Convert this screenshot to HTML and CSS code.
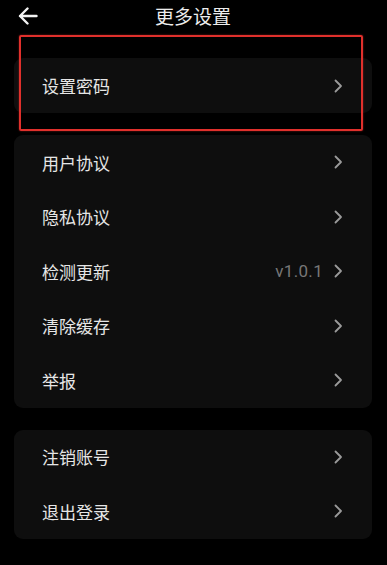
FILE: index.html
```html
<!DOCTYPE html>
<html lang="zh">
<head>
<meta charset="utf-8">
<link rel="stylesheet" href="styles.css">
</head>
<body>
<div class="page">
  <header class="header">
    <svg class="back" width="20" height="18" viewBox="0 0 20 18"><path d="M18.5 9H2M9.5 1.5L2 9l7.5 7.5" fill="none" stroke="#f2f2f2" stroke-width="2.4" stroke-linecap="round" stroke-linejoin="round"/></svg>
    <h1 class="title">更多设置</h1>
  </header>
  <div class="group first">
    <div class="row tall"><span class="label">设置密码</span><span class="right"><svg class="chev" width="9" height="14" viewBox="0 0 9 14"><path d="M1.5 1.5L7 7l-5.5 5.5" fill="none" stroke="#9a9a9a" stroke-width="1.8" stroke-linecap="round" stroke-linejoin="round"/></svg></span></div>
    <div class="highlight"></div>
  </div>
  <div class="group">
    <div class="row"><span class="label">用户协议</span><span class="right"><svg class="chev" width="9" height="14" viewBox="0 0 9 14"><path d="M1.5 1.5L7 7l-5.5 5.5" fill="none" stroke="#9a9a9a" stroke-width="1.8" stroke-linecap="round" stroke-linejoin="round"/></svg></span></div>
    <div class="row"><span class="label">隐私协议</span><span class="right"><svg class="chev" width="9" height="14" viewBox="0 0 9 14"><path d="M1.5 1.5L7 7l-5.5 5.5" fill="none" stroke="#9a9a9a" stroke-width="1.8" stroke-linecap="round" stroke-linejoin="round"/></svg></span></div>
    <div class="row"><span class="label">检测更新</span><span class="right"><span class="ver">v1.0.1</span><svg class="chev" width="9" height="14" viewBox="0 0 9 14"><path d="M1.5 1.5L7 7l-5.5 5.5" fill="none" stroke="#9a9a9a" stroke-width="1.8" stroke-linecap="round" stroke-linejoin="round"/></svg></span></div>
    <div class="row"><span class="label">清除缓存</span><span class="right"><svg class="chev" width="9" height="14" viewBox="0 0 9 14"><path d="M1.5 1.5L7 7l-5.5 5.5" fill="none" stroke="#9a9a9a" stroke-width="1.8" stroke-linecap="round" stroke-linejoin="round"/></svg></span></div>
    <div class="row"><span class="label">举报</span><span class="right"><svg class="chev" width="9" height="14" viewBox="0 0 9 14"><path d="M1.5 1.5L7 7l-5.5 5.5" fill="none" stroke="#9a9a9a" stroke-width="1.8" stroke-linecap="round" stroke-linejoin="round"/></svg></span></div>
  </div>
  <div class="group">
    <div class="row"><span class="label">注销账号</span><span class="right"><svg class="chev" width="9" height="14" viewBox="0 0 9 14"><path d="M1.5 1.5L7 7l-5.5 5.5" fill="none" stroke="#9a9a9a" stroke-width="1.8" stroke-linecap="round" stroke-linejoin="round"/></svg></span></div>
    <div class="row"><span class="label">退出登录</span><span class="right"><svg class="chev" width="9" height="14" viewBox="0 0 9 14"><path d="M1.5 1.5L7 7l-5.5 5.5" fill="none" stroke="#9a9a9a" stroke-width="1.8" stroke-linecap="round" stroke-linejoin="round"/></svg></span></div>
  </div>
</div>
</body>
</html>
```
FILE: styles.css
```css
html, body {
  margin: 0;
  padding: 0;
  background: #000;
}
body {
  font-family: "Noto Sans CJK SC", "Noto Sans", sans-serif;
  color: #e8e8e8;
  width: 387px;
  height: 565px;
  overflow: hidden;
}
.page {
  display: flex;
  flex-direction: column;
  padding: 0 15px 0 14px;
}
.header {
  position: relative;
  height: 32px;
  display: flex;
  align-items: center;
  justify-content: center;
  margin-bottom: 26px;
}
.back {
  position: absolute;
  left: 4px;
  top: 7px;
}
.title {
  margin: 0;
  font-size: 19px;
  font-weight: 400;
  color: #ededed;
  line-height: 32px;
}
.group {
  background: #0e0e0e;
  border-radius: 9px;
  margin-bottom: 22px;
  display: flex;
  flex-direction: column;
}
.group.first {
  position: relative;
}
.row {
  height: 54.5px;
  display: flex;
  align-items: center;
  justify-content: space-between;
  padding: 0 29px 0 28px;
}
.row.tall {
  height: 55px;
}
.label {
  font-size: 17px;
  color: #e6e6e6;
}
.right {
  display: flex;
  align-items: center;
  gap: 11px;
}
.ver {
  font-family: Roboto, "Noto Sans", sans-serif;
  font-size: 17px;
  letter-spacing: 0.3px;
  color: #777;
}
.chev {
  display: block;
}
.highlight {
  position: absolute;
  left: 5px;
  top: -23px;
  width: 340px;
  height: 92px;
  border: 2px solid #e0302c;
  border-radius: 2px;
  box-shadow: 0 0 2px rgba(224,48,44,0.6);
  pointer-events: none;
}
```
